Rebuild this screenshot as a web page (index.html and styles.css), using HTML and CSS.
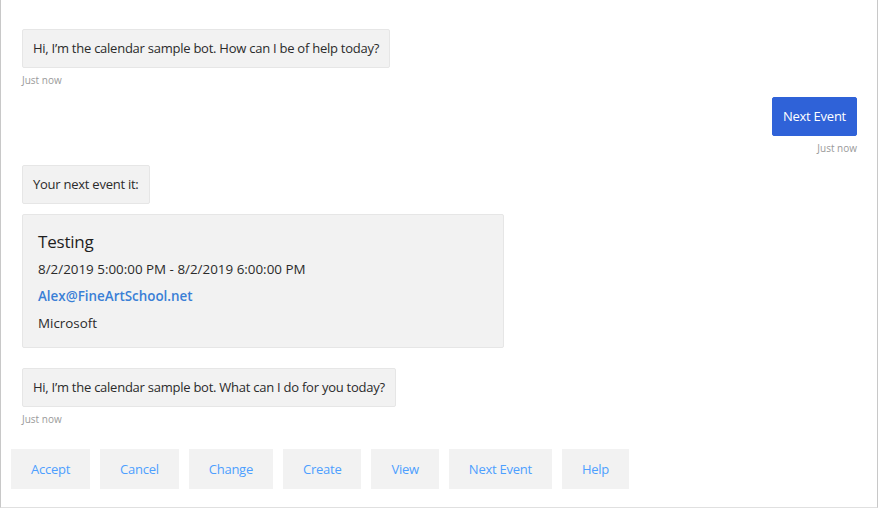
FILE: index.html
```html
<!DOCTYPE html>
<html>
<head>
<meta charset="utf-8">
<link rel="stylesheet" href="styles.css">
</head>
<body>
<div class="chat">
  <div class="transcript">
    <div class="activity bot">
      <div class="bubble">Hi, I’m the calendar sample bot. How can I be of help today?</div>
      <div class="stamp">Just now</div>
    </div>
    <div class="activity user">
      <div class="bubble user-bubble">Next Event</div>
      <div class="stamp">Just now</div>
    </div>
    <div class="activity bot">
      <div class="bubble">Your next event it:</div>
      <div class="card">
        <div class="card-title">Testing</div>
        <div class="card-line">8/2/2019 5:00:00 PM - 8/2/2019 6:00:00 PM</div>
        <div class="card-line card-link">Alex@FineArtSchool.net</div>
        <div class="card-line">Microsoft</div>
      </div>
    </div>
    <div class="activity bot spaced">
      <div class="bubble">Hi, I’m the calendar sample bot. What can I do for you today?</div>
      <div class="stamp">Just now</div>
    </div>
  </div>
  <div class="actions">
    <button class="action">Accept</button>
    <button class="action">Cancel</button>
    <button class="action">Change</button>
    <button class="action">Create</button>
    <button class="action">View</button>
    <button class="action">Next Event</button>
    <button class="action">Help</button>
  </div>
</div>
</body>
</html>
```

FILE: styles.css
```css
* { box-sizing: border-box; }
html, body { margin: 0; padding: 0; background: #fff; }
body {
  font-family: "Open Sans", "Noto Sans", sans-serif;
  font-size: 13px;
  color: #2b2b2b;
}
.chat {
  width: 878px;
  height: 508px;
  border-left: 1px solid #c8c8c8;
  border-right: 1px solid #c8c8c8;
  border-bottom: 1px solid #e0e0e0;
  display: flex;
  flex-direction: column;
}
.transcript {
  padding: 29px 20px 0 21px;
  display: flex;
  flex-direction: column;
}
.activity {
  display: flex;
  flex-direction: column;
  align-items: flex-start;
  margin-bottom: 10px;
}
.activity.user { align-items: flex-end; }
.activity.spaced { margin-top: 10px; }
.bubble {
  background: #f2f2f2;
  border: 1px solid #e6e6e6;
  border-radius: 2px;
  padding: 0 10px;
  height: 39px;
  line-height: 37px;
  white-space: nowrap;
  letter-spacing: -0.25px;
}
.user-bubble {
  background: #2f62d8;
  border-color: #2f62d8;
  color: #fff;
}
.stamp {
  margin-top: 5px;
  font-size: 10px;
  line-height: 14px;
  color: #9a9a9a;
}
.card {
  margin-top: 10px;
  width: 482px;
  background: #f2f2f2;
  border: 1px solid #e6e6e6;
  border-radius: 2px;
  padding: 16px 15px 14px;
}
.card-title {
  font-size: 17px;
  line-height: 21px;
  color: #1f1f1f;
  font-weight: 500;
  letter-spacing: -0.2px;
}
.card-line {
  margin-top: 7px;
  line-height: 20px;
  font-size: 13.4px;
  color: #2b2b2b;
}
.card-link {
  color: #3a7fd6;
  font-weight: 600;
}
.actions {
  margin-top: auto;
  margin-bottom: 18px;
  padding: 0 10px;
  display: flex;
  gap: 10px;
}
.action {
  height: 40px;
  padding: 0 20px;
  border: none;
  background: #f2f2f2;
  color: #4d9fff;
  font-family: inherit;
  font-size: 13px;
  letter-spacing: -0.25px;
  cursor: pointer;
}
```
